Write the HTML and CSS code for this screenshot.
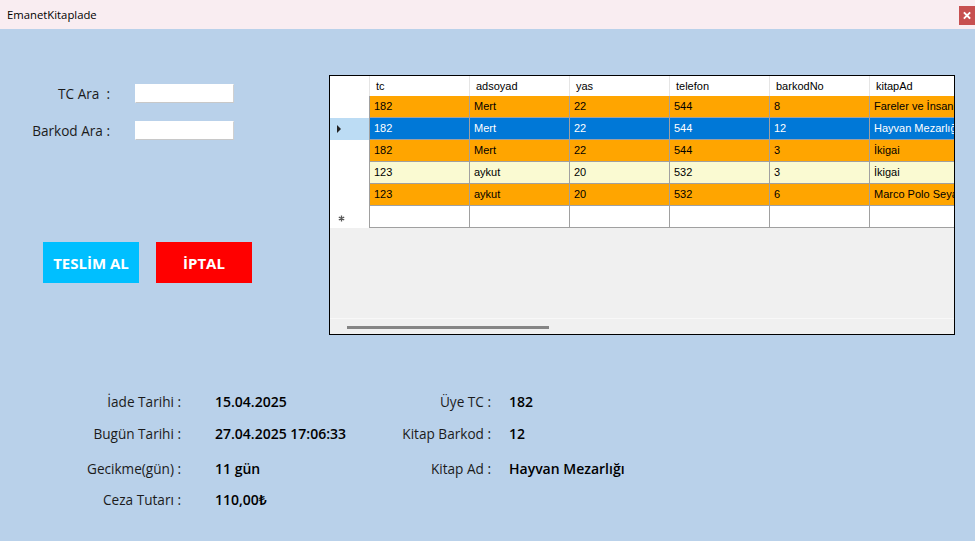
FILE: index.html
```html
<!DOCTYPE html>
<html lang="tr">
<head>
<meta charset="utf-8">
<title>EmanetKitaplade</title>
<link rel="stylesheet" href="styles.css">
</head>
<body>
<div class="window">
  <div class="titlebar">
    <span class="title">EmanetKitaplade</span>
    <div class="close"><svg width="16" height="19" viewBox="0 0 16 19"><path d="M5.5 7 L10.5 12 M10.5 7 L5.5 12" stroke="#fff" stroke-width="1.8" stroke-linecap="square"/></svg></div>
  </div>
  <div class="form">
    <div class="top">
      <div class="left">
        <div class="search">
          <label class="lbl">TC Ara&nbsp; :</label><div class="tb"></div>
          <label class="lbl">Barkod Ara :</label><div class="tb"></div>
        </div>
        <div class="buttons">
          <div class="btn teslim">TESLİM AL</div>
          <div class="btn iptal">İPTAL</div>
        </div>
      </div>
      <div class="dgv">
        <div class="rows">
          <div class="row head">
            <div class="rh"></div>
            <div class="c">tc</div><div class="c">adsoyad</div><div class="c">yas</div><div class="c">telefon</div><div class="c">barkodNo</div><div class="c">kitapAd</div>
          </div>
          <div class="row orange">
            <div class="rh"></div>
            <div class="c">182</div><div class="c">Mert</div><div class="c">22</div><div class="c">544</div><div class="c">8</div><div class="c">Fareler ve İnsanlar</div>
          </div>
          <div class="row sel">
            <div class="rh cur"><svg width="8" height="10" viewBox="0 0 8 10"><path d="M2 1 L6 5 L2 9 Z" fill="#222"/></svg></div>
            <div class="c">182</div><div class="c">Mert</div><div class="c">22</div><div class="c">544</div><div class="c">12</div><div class="c">Hayvan Mezarlığı</div>
          </div>
          <div class="row orange">
            <div class="rh"></div>
            <div class="c">182</div><div class="c">Mert</div><div class="c">22</div><div class="c">544</div><div class="c">3</div><div class="c">İkigai</div>
          </div>
          <div class="row yellow">
            <div class="rh"></div>
            <div class="c">123</div><div class="c">aykut</div><div class="c">20</div><div class="c">532</div><div class="c">3</div><div class="c">İkigai</div>
          </div>
          <div class="row orange">
            <div class="rh"></div>
            <div class="c">123</div><div class="c">aykut</div><div class="c">20</div><div class="c">532</div><div class="c">6</div><div class="c">Marco Polo Seyahatname</div>
          </div>
          <div class="row newrow">
            <div class="rh star"><svg width="7" height="7" viewBox="0 0 7 7"><path d="M3.5 0.5 V6.5 M0.8 2 L6.2 5 M6.2 2 L0.8 5" stroke="#555" stroke-width="1.3"/></svg></div>
            <div class="c"></div><div class="c"></div><div class="c"></div><div class="c"></div><div class="c"></div><div class="c"></div>
          </div>
        </div>
        <div class="empty"></div>
        <div class="hscroll"><div class="thumb"></div></div>
      </div>
    </div>
    <div class="info">
      <div class="lbl">İade Tarihi :</div><div class="val">15.04.2025</div><div class="lbl">Üye TC :</div><div class="val v2">182</div>
      <div class="lbl">Bugün Tarihi :</div><div class="val">27.04.2025 17:06:33</div><div class="lbl">Kitap Barkod :</div><div class="val v2">12</div>
      <div class="lbl">Gecikme(gün) :</div><div class="val">11 gün</div><div class="lbl">Kitap Ad :</div><div class="val v2">Hayvan Mezarlığı</div>
      <div class="lbl">Ceza Tutarı :</div><div class="val">110,00₺</div><div></div><div></div>
    </div>
  </div>
</div>
</body>
</html>
```

FILE: styles.css
```css
* { box-sizing: border-box; }
html, body { margin: 0; padding: 0; }
body {
  width: 975px;
  height: 541px;
  overflow: hidden;
  background: #b9d1ea;
  font-family: "Open Sans", "Noto Sans", sans-serif;
}
.window { width: 975px; height: 541px; display: flex; flex-direction: column; }

.titlebar {
  height: 29px;
  background: #f9edf1;
  display: flex;
  align-items: flex-start;
  justify-content: space-between;
  flex-shrink: 0;
}
.title {
  font-size: 11.3px;
  line-height: 29px;
  padding-left: 7px;
  color: #000;
}
.close {
  margin-top: 6px;
  width: 16px;
  height: 19px;
  background: #c75050;
  display: flex;
}

.form { flex: 1; background: #b9d1ea; }
.top { display: flex; align-items: flex-start; }
.left { width: 329px; }

.search {
  margin-top: 55px;
  display: grid;
  grid-template-columns: 110px 99px;
  grid-auto-rows: 19px;
  column-gap: 25px;
  row-gap: 18px;
}
.lbl {
  font-size: 13.6px;
  line-height: 19px;
  text-align: right;
  color: #1b1b1b;
  white-space: nowrap;
}
.tb {
  background: #fff;
  border: 1px solid #fff;
  border-right-color: #d0d0d0;
  border-bottom-color: #c8c8c8;
}

.buttons {
  margin-top: 102px;
  padding-left: 43px;
  display: flex;
  gap: 17px;
}
.btn {
  height: 41px;
  color: #fff;
  font-weight: 700;
  font-size: 15px;
  display: flex;
  align-items: center;
  justify-content: center;
}
.teslim { width: 96px; background: #00bfff; }
.iptal { width: 96px; background: #ff0000; }

.dgv {
  margin-top: 46px;
  width: 626px;
  height: 260px;
  border: 1px solid #000;
  background: #f0f0f0;
  display: flex;
  flex-direction: column;
  overflow: hidden;
}
.rows { width: 624px; overflow: hidden; flex-shrink: 0; }
.row { display: flex; height: 22px; width: 640px; }
.row .rh {
  width: 40px;
  flex-shrink: 0;
  background: #fff;
  border-right: 1px solid #a0a0a0;
  display: flex;
  align-items: center;
}
.row .c {
  width: 100px;
  flex-shrink: 0;
  border-right: 1px solid #a0a0a0;
  border-bottom: 1px solid #a0a0a0;
  font-family: "Liberation Sans", Arial, sans-serif;
  font-size: 11px;
  line-height: 21px;
  padding-left: 4px;
  color: #000;
  white-space: nowrap;
  overflow: hidden;
}
.row.head { height: 20px; background: #fff; }
.row.head .rh { border-right-color: #e5e5e5; }
.row.head .c {
  border-right-color: #e5e5e5;
  border-bottom: none;
  line-height: 20px;
  padding-left: 6px;
}
.row.orange .c { background: #ffa500; }
.row.yellow .c { background: #fafad2; }
.row.sel .c { background: #0078d7; color: #fff; }
.row.newrow .c { background: #fff; }
.rh.cur { background: #bcdcf4; padding-left: 5px; }
.rh.star { padding-left: 8px; padding-top: 3px; }

.empty { flex: 1; }
.hscroll {
  height: 16px;
  border-top: 1px solid #f8f8f8;
  padding-top: 7px;
  padding-left: 17px;
  flex-shrink: 0;
}
.thumb { width: 202px; height: 3px; background: #858585; }

.info {
  margin-top: 57px;
  display: grid;
  grid-template-columns: 181px 184px 126px auto;
  grid-template-rows: 32px 35px 31px 20px;
}
.info .lbl { line-height: 20px; font-size: 13.6px; }
.info .val {
  line-height: 20px;
  font-size: 14px;
  font-weight: 600;
  color: #000;
  padding-left: 34px;
  white-space: nowrap;
}
.info .val.v2 { padding-left: 18px; }
```
